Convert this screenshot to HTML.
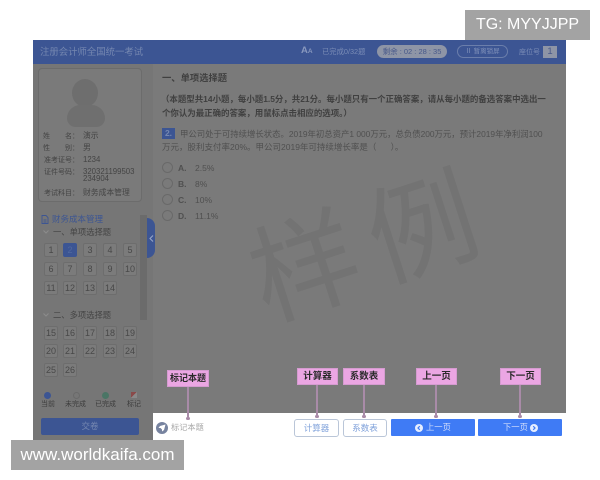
<!DOCTYPE html>
<html><head><meta charset="utf-8">
<style>
html,body{margin:0;padding:0;background:#fff}
#p{position:relative;width:600px;height:480px;overflow:hidden;background:#fff;font-family:"Liberation Sans","Noto Sans CJK SC",sans-serif;color:#444;filter:blur(.3px)}
#p div{position:absolute;white-space:nowrap;box-sizing:border-box}
.n{width:14px;height:14px;border:1px solid #6d6d6d;border-radius:2px;background:#7b7b7b;font-size:9px;line-height:13px;text-align:center;color:#484848}
.i{font-size:7px;line-height:9px;color:#444}
.v{font-size:7.8px;line-height:8px;color:#444;left:83px}
.lb{background:#eba6e3;border:1px solid #d59bd0;color:#2a2a2a;font-weight:bold;font-size:9.5px;text-align:center;height:17px;line-height:15px}
.ln{width:1.5px;background:#a98ba8}
.dot{width:3.5px;height:3.5px;border-radius:50%;background:#a98ba8}
.b1{background:#fff;border:1px solid #bac6d8;border-radius:3px;color:#7ea0da;font-size:8.5px;text-align:center;height:18px;line-height:16px}
.b2{background:#3f7bf5;border-radius:1px;color:#cfdcfb;font-size:8.3px;line-height:17px;height:17px;width:84px}
.r{width:11px;height:11px;border:1px solid #696969;border-radius:50%;left:162px}
.o{font-size:8.5px;color:#505050;line-height:12px}
.l{font-size:7px;color:#3d3d3d;line-height:9px}
.wm{width:130px;height:130px;font-size:108px;line-height:130px;text-align:center;color:#737373;font-family:"Noto Sans CJK SC",sans-serif}
</style></head><body><div id="p">
<div style="left:465px;top:10px;width:125px;height:30px;background:#a3a3a3;color:#fff;font-size:16px;line-height:30px;text-align:center">TG: MYYJJPP</div>

<div style="left:33px;top:40px;width:533px;height:373px;background:#7a7a7a"></div>
<div style="left:33px;top:40px;width:533px;height:24px;background:#3c5593"></div>
<div style="left:40px;top:46px;font-size:9.4px;line-height:12px;color:#7587b0">注册会计师全国统一考试</div>
<div style="left:301px;top:45px;font-size:9.5px;font-weight:bold;line-height:12px;color:#8898be">A<span style="font-size:6.5px">A</span></div>
<div style="left:322px;top:47px;font-size:7.3px;line-height:9px;color:#7a8cb6">已完成0/32题</div>
<div style="left:377px;top:45px;width:70px;height:13px;border-radius:7px;background:#8e95a6;color:#48598a;font-size:7.5px;line-height:13px;text-align:center">剩余 : 02 : 28 : 35</div>
<div style="left:457px;top:45px;width:51px;height:13px;border-radius:7px;border:1px solid #6b7eab;color:#8192ba;font-size:6.5px;line-height:11px;text-align:center">Ⅱ 暂离锁屏</div>
<div style="left:519px;top:48px;font-size:7px;line-height:9px;color:#7a8cb6">座位号</div>
<div style="left:543px;top:46px;width:14px;height:12px;background:#8e95a6;color:#48598a;font-size:9.5px;line-height:12px;text-align:center">1</div>

<!-- sidebar -->
<div style="left:33px;top:64px;width:120px;height:376px;background:#767676"></div>
<div style="left:38px;top:68px;width:104px;height:134px;border:1px solid #6c6c6c;border-radius:4px;background:#7a7a7a"></div>
<div style="left:72px;top:79px;width:26px;height:28px;border-radius:50%;background:#6e6e6e"></div>
<div style="left:67px;top:105px;width:38px;height:22px;border-radius:14px 14px 9px 9px;background:#6f6f6f"></div>
<div class="i" style="left:43px;top:132px">姓</div><div class="i" style="left:65px;top:132px">名：</div><div class="v" style="top:132px">演示</div>
<div class="i" style="left:43px;top:144px">性</div><div class="i" style="left:65px;top:144px">别：</div><div class="v" style="top:144px">男</div>
<div class="i" style="left:44px;top:156px">准考证号：</div><div class="v" style="top:156px">1234</div>
<div class="i" style="left:44px;top:168px">证件号码：</div><div class="v" style="top:168px">320321199503</div>
<div class="v" style="top:175px">234904</div>
<div class="i" style="left:44px;top:189px">考试科目：</div><div class="v" style="top:189px">财务成本管理</div>

<div style="left:140px;top:215px;width:7px;height:105px;background:#6b6b6b"></div>
<div style="left:147px;top:218px;width:8px;height:40px;background:#3c5593;border-radius:0 8px 8px 0"></div>
<svg style="position:absolute;left:149px;top:235px" width="5" height="7" viewBox="0 0 5 7"><path d="M4 .5 1 3.5 4 6.500" fill="none" stroke="#97a6c8" stroke-width="1.100"/></svg>
<svg style="position:absolute;left:41px;top:215px" width="8" height="9" viewBox="0 0 8 9"><path d="M1 .5h4l2 2v6H1zM2.500 5h3M2.500 7h3" fill="none" stroke="#3c5593" stroke-width=".9"/></svg>
<div style="left:52px;top:214px;font-size:8.5px;line-height:11px;color:#3c5593">财务成本管理</div>
<svg style="position:absolute;left:43px;top:230px" width="6" height="4" viewBox="0 0 6 4"><path d="M.5.5 3 3 5.500.5" fill="none" stroke="#8c8c8c"/></svg>
<div style="left:53px;top:227px;font-size:8.3px;line-height:11px;color:#444">一、单项选择题</div>
<svg style="position:absolute;left:43px;top:313px" width="6" height="4" viewBox="0 0 6 4"><path d="M.5.5 3 3 5.500.5" fill="none" stroke="#8c8c8c"/></svg>
<div style="left:53px;top:310px;font-size:8.3px;line-height:11px;color:#444">二、多项选择题</div>

<div class="n" style="left:44px;top:243px">1</div>
<div class="n" style="left:63px;top:243px;background:#3c5593;border-color:#3c5593;color:#52699f">2</div>
<div class="n" style="left:83px;top:243px">3</div>
<div class="n" style="left:103px;top:243px">4</div>
<div class="n" style="left:123px;top:243px">5</div>
<div class="n" style="left:44px;top:262px">6</div>
<div class="n" style="left:63px;top:262px">7</div>
<div class="n" style="left:83px;top:262px">8</div>
<div class="n" style="left:103px;top:262px">9</div>
<div class="n" style="left:123px;top:262px">10</div>
<div class="n" style="left:44px;top:281px">11</div>
<div class="n" style="left:63px;top:281px">12</div>
<div class="n" style="left:83px;top:281px">13</div>
<div class="n" style="left:103px;top:281px">14</div>
<div class="n" style="left:44px;top:326px">15</div>
<div class="n" style="left:63px;top:326px">16</div>
<div class="n" style="left:83px;top:326px">17</div>
<div class="n" style="left:103px;top:326px">18</div>
<div class="n" style="left:123px;top:326px">19</div>
<div class="n" style="left:44px;top:344px">20</div>
<div class="n" style="left:63px;top:344px">21</div>
<div class="n" style="left:83px;top:344px">22</div>
<div class="n" style="left:103px;top:344px">23</div>
<div class="n" style="left:123px;top:344px">24</div>
<div class="n" style="left:44px;top:363px">25</div>
<div class="n" style="left:63px;top:363px">26</div>

<div style="left:44px;top:392px;width:7px;height:7px;border-radius:50%;background:#3c5593"></div>
<div style="left:73px;top:392px;width:7px;height:7px;border-radius:50%;border:1px solid #6a6a6a"></div>
<div style="left:102px;top:392px;width:7px;height:7px;border-radius:50%;background:#4a7565"></div>
<div style="left:131px;top:392px;width:6px;height:6px;background:linear-gradient(135deg,#8a4a4a 50%,#8a8a8a 50%)"></div>
<div class="l" style="left:41px;top:400px">当前</div>
<div class="l" style="left:65px;top:400px">未完成</div>
<div class="l" style="left:95px;top:400px">已完成</div>
<div class="l" style="left:127px;top:400px">标记</div>
<div style="left:41px;top:418px;width:98px;height:17px;background:#3c5593;border-radius:2px;color:#7587b0;font-size:8.5px;line-height:17px;text-align:center">交卷</div>

<!-- watermark -->
<div class="wm" style="left:238px;top:195px;transform:rotate(-18deg)">样</div>
<div class="wm" style="left:355px;top:156px;transform:rotate(-18deg)">例</div>

<!-- content -->
<div style="left:162px;top:72px;font-size:9.3px;font-weight:bold;line-height:13px;color:#404040">一、单项选择题</div>
<div style="left:161px;top:93px;font-size:8.45px;font-weight:bold;line-height:12px;color:#404040">（本题型共14小题，每小题1.5分，共21分。每小题只有一个正确答案，请从每小题的备选答案中选出一</div>
<div style="left:162px;top:107px;font-size:8.45px;font-weight:bold;line-height:12px;color:#404040">个你认为最正确的答案，用鼠标点击相应的选项。）</div>
<div style="left:162px;top:128px;width:13px;height:11px;background:#3c5593;color:#7587b0;font-size:8.5px;font-weight:bold;line-height:11px;text-align:center">2.</div>
<div style="left:180px;top:127.500px;font-size:8.4px;line-height:12px;color:#505050">甲公司处于可持续增长状态。2019年初总资产1 000万元，总负债200万元，预计2019年净利润100</div>
<div style="left:162px;top:141px;font-size:8.5px;line-height:12px;color:#505050">万元，股利支付率20%。甲公司2019年可持续增长率是（&nbsp;&nbsp;&nbsp;&nbsp;&nbsp;&nbsp;）。</div>
<div class="r" style="top:162px"></div><div class="o" style="left:178px;top:162px"><b>A.</b></div><div class="o" style="left:195px;top:162px">2.5%</div>
<div class="r" style="top:178px"></div><div class="o" style="left:178px;top:178px"><b>B.</b></div><div class="o" style="left:195px;top:178px">8%</div>
<div class="r" style="top:194px"></div><div class="o" style="left:178px;top:194px"><b>C.</b></div><div class="o" style="left:195px;top:194px">10%</div>
<div class="r" style="top:210px"></div><div class="o" style="left:178px;top:210px"><b>D.</b></div><div class="o" style="left:195px;top:210px">11.1%</div>

<!-- bottom bar -->
<div style="left:153px;top:413px;width:413px;height:27px;background:#fff"></div>
<svg style="position:absolute;left:156px;top:422px" width="12" height="12" viewBox="0 0 12 12"><circle cx="6" cy="6" r="6" fill="#77839f"/><path d="M9.500 2.500 4 4 2.500 6 4.500 6 6 7.500 6 9.500 8 8z" fill="#fff"/></svg>
<div style="left:171px;top:422px;font-size:8.2px;line-height:11px;color:#a8a8a8">标记本题</div>
<div class="b1" style="left:294px;top:419px;width:45px">计算器</div>
<div class="b1" style="left:343px;top:419px;width:44px">系数表</div>
<div class="b2" style="left:391px;top:419px"></div>
<svg style="position:absolute;left:415px;top:424px" width="8" height="8" viewBox="0 0 8 8"><circle cx="4" cy="4" r="4" fill="#e6eeff"/><path d="M4.800 2.200 3 4l1.800 1.800" fill="none" stroke="#3f7bf5" stroke-width="1.200"/></svg>
<div style="left:426px;top:419px;font-size:8.3px;line-height:17px;color:#cfdcfb">上一页</div>
<div class="b2" style="left:478px;top:419px"></div>
<div style="left:503px;top:419px;font-size:8.3px;line-height:17px;color:#cfdcfb">下一页</div>
<svg style="position:absolute;left:530px;top:424px" width="8" height="8" viewBox="0 0 8 8"><circle cx="4" cy="4" r="4" fill="#e6eeff"/><path d="M3.200 2.200 5 4 3.200 5.800" fill="none" stroke="#3f7bf5" stroke-width="1.200"/></svg>

<!-- callouts -->
<div class="ln" style="left:187.300px;top:387px;height:30px"></div><div class="dot" style="left:186px;top:416.500px"></div>
<div class="ln" style="left:316.300px;top:385px;height:30px"></div><div class="dot" style="left:315px;top:414.500px"></div>
<div class="ln" style="left:363.300px;top:385px;height:30px"></div><div class="dot" style="left:362px;top:414.500px"></div>
<div class="ln" style="left:435.300px;top:385px;height:30px"></div><div class="dot" style="left:434px;top:414.500px"></div>
<div class="ln" style="left:519.300px;top:385px;height:30px"></div><div class="dot" style="left:518px;top:414.500px"></div>
<div class="lb" style="left:167px;top:370px;width:42px;font-size:9px">标记本题</div>
<div class="lb" style="left:297px;top:368px;width:41px">计算器</div>
<div class="lb" style="left:343px;top:368px;width:42px">系数表</div>
<div class="lb" style="left:416px;top:368px;width:41px">上一页</div>
<div class="lb" style="left:500px;top:368px;width:41px">下一页</div>

<div style="left:11px;top:440px;width:173px;height:30px;background:#a3a3a3;color:#fff;font-size:17px;line-height:30px;text-align:center">www.worldkaifa.com</div>
</div></body></html>
